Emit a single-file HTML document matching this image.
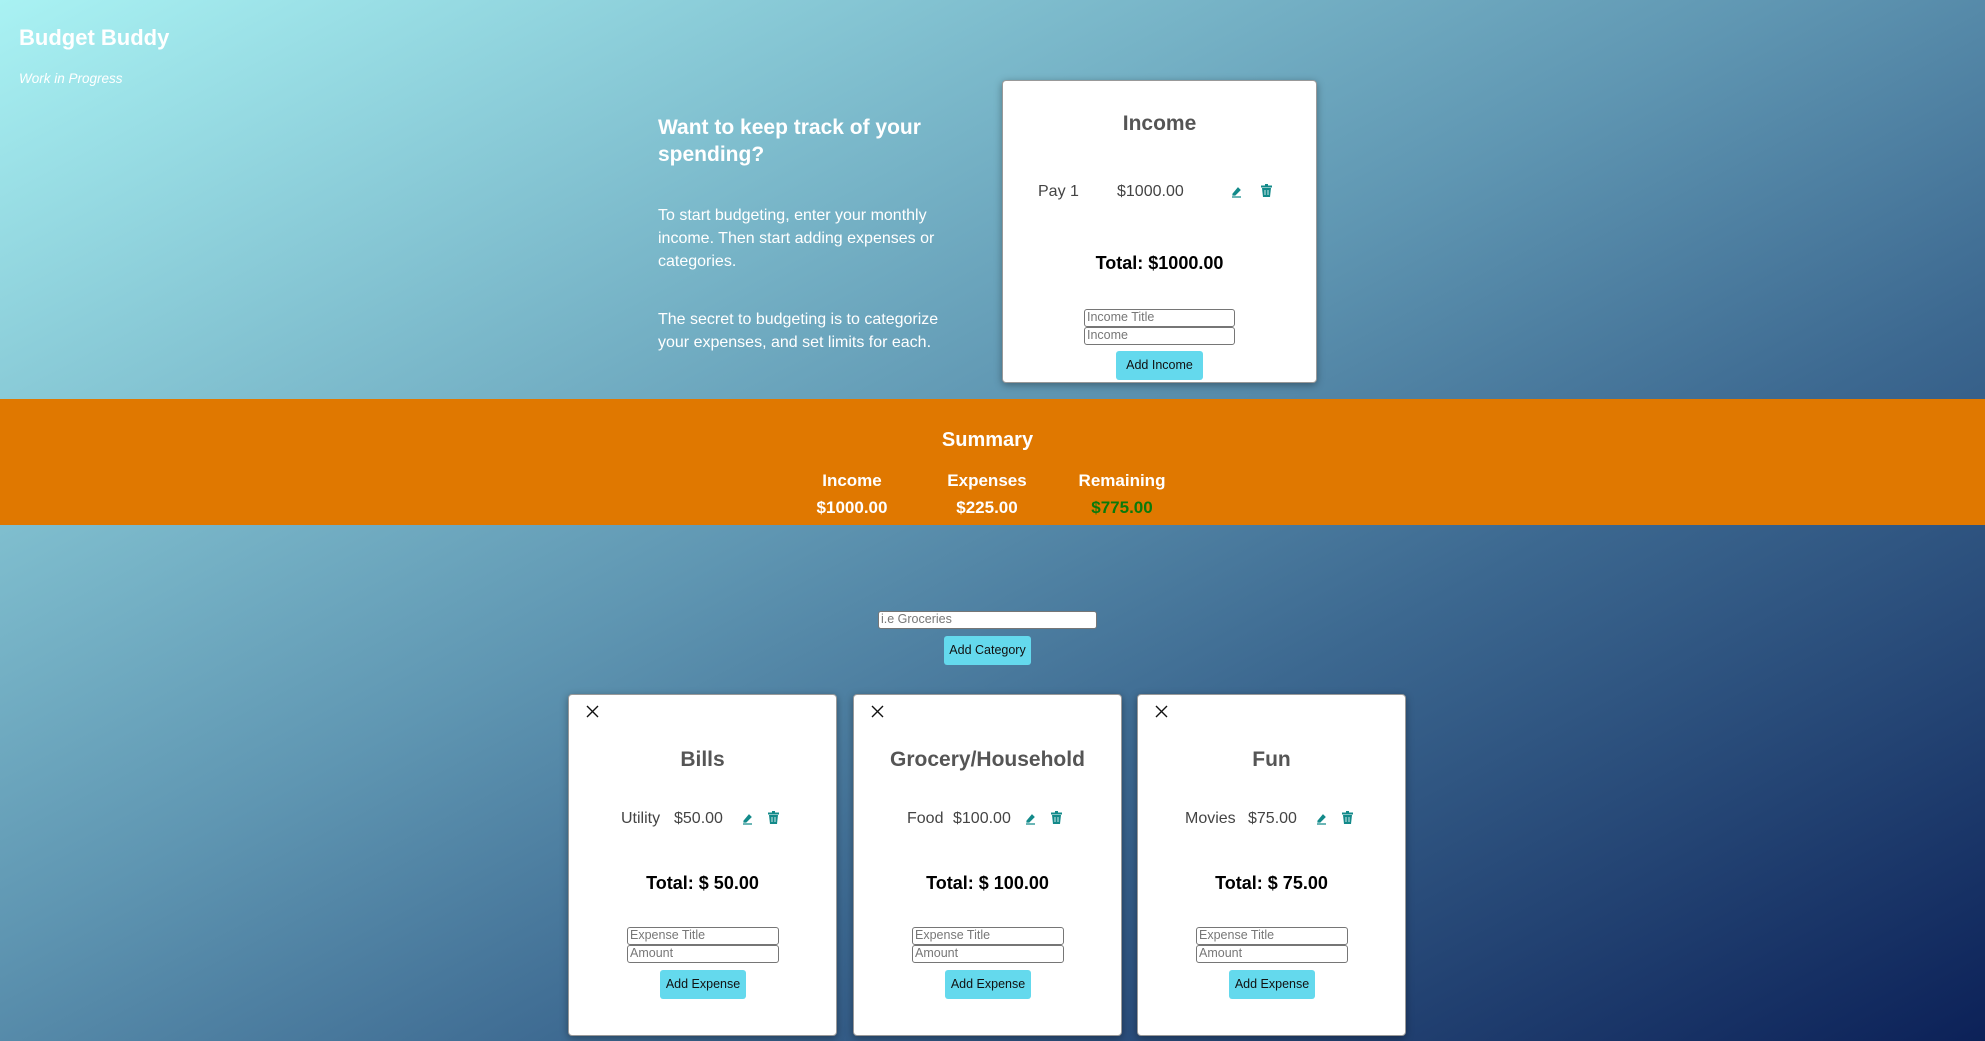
<!DOCTYPE html>
<html><head><meta charset="utf-8"><style>
*{margin:0;padding:0;box-sizing:border-box}
body{width:1985px;height:1041px;overflow:hidden;position:relative;font-family:"Liberation Sans",sans-serif;background:linear-gradient(to bottom right,#a9f2f3 0%,#5f96b2 45%,#3c6890 65%,#0c2158 100%)}
.a{position:absolute;white-space:nowrap}
.card{position:absolute;background:#fff;border:1px solid #999;border-radius:4px;box-shadow:0 2px 8px rgba(0,0,0,.35)}
.c{position:absolute;left:0;right:0;text-align:center;white-space:nowrap}
.inp{position:absolute;border:1px solid #767676;border-radius:3px;background:#fff;color:#777;font-size:12.5px;padding-left:2px;line-height:15px;height:18px}
.btn{position:absolute;background:#64d9ed;border-radius:3px;font-size:12.5px;color:#111;text-align:center}
.ttl{font-weight:bold;color:#555;font-size:21px}
.row{color:#444;font-size:16px;font-weight:300}
.tot{font-weight:bold;font-size:18px;color:#000}
.w{color:#fff}
</style></head><body>
<div class="a w" style="left:19px;top:25px;font-size:22px;font-weight:bold">Budget Buddy</div>
<div class="a w" style="left:19px;top:71px;font-size:13.5px;font-style:italic">Work in Progress</div>

<div class="a w" style="left:658px;top:114px;font-size:21px;font-weight:bold;line-height:27px">Want to keep track of your<br>spending?</div>
<div class="a w" style="left:658px;top:204px;font-size:16px;line-height:23px">To start budgeting, enter your monthly<br>income. Then start adding expenses or<br>categories.</div>
<div class="a w" style="left:658px;top:308px;font-size:16px;line-height:23px">The secret to budgeting is to categorize<br>your expenses, and set limits for each.</div>

<div class="card" style="left:1002px;top:80px;width:315px;height:303px">
 <div class="c ttl" style="top:31px">Income</div>
 <div class="a row" style="left:35px;top:102px">Pay 1</div>
 <div class="a row" style="left:114px;top:102px">$1000.00</div>
 <svg class="a" style="left:229px;top:105px" width="10" height="12" viewBox="0 0 10 12"><path d="M1 8 L6 2 L8 4 L3 9 L1 9Z M0 11 H9" fill="#138a8a" stroke="#138a8a" stroke-width="1.2"/></svg>
 <svg class="a" style="left:258px;top:103px" width="11" height="13" viewBox="0 0 11 13"><rect x="0" y="1.5" width="11" height="2" fill="#138a8a"/><rect x="4" y="0" width="3" height="2" fill="#138a8a"/><path d="M1 4 H10 L9 13 H2Z" fill="#138a8a"/><path d="M4 6 V11 M7 6 V11" stroke="#fff" stroke-width=".8"/></svg>
 <div class="c tot" style="top:172px">Total: $1000.00</div>
 <div class="inp" style="left:81px;top:228px;width:151px">Income Title</div>
 <div class="inp" style="left:81px;top:246px;width:151px">Income</div>
 <div class="btn" style="left:113px;top:270px;width:87px;height:29px;line-height:29px">Add Income</div>
</div>

<div style="position:absolute;left:0;top:399px;width:1985px;height:126px;background:#e07800"></div>
<div class="a w" style="left:0;width:1975px;text-align:center;top:429px;font-size:20px;font-weight:bold">Summary</div>
<div class="a w" style="left:792px;width:120px;text-align:center;top:471px;font-size:17px;font-weight:bold">Income</div>
<div class="a w" style="left:927px;width:120px;text-align:center;top:471px;font-size:17px;font-weight:bold">Expenses</div>
<div class="a w" style="left:1062px;width:120px;text-align:center;top:471px;font-size:17px;font-weight:bold">Remaining</div>
<div class="a w" style="left:792px;width:120px;text-align:center;top:498px;font-size:17px;font-weight:bold">$1000.00</div>
<div class="a w" style="left:927px;width:120px;text-align:center;top:498px;font-size:17px;font-weight:bold">$225.00</div>
<div class="a" style="left:1062px;width:120px;text-align:center;top:498px;font-size:17px;font-weight:bold;color:#0a7a0a">$775.00</div>

<div class="inp" style="left:878px;top:611px;width:219px">i.e Groceries</div>
<div class="btn" style="left:944px;top:636px;width:87px;height:29px;line-height:29px">Add Category</div>

<div class="card" style="left:568px;top:694px;width:269px;height:342px">
 <svg class="a" style="left:17px;top:10px" width="13" height="13"><path d="M1 1L12 12M12 1L1 12" stroke="#111" stroke-width="1.4"/></svg>
 <div class="c ttl" style="top:53px">Bills</div>
 <div class="a row" style="left:52px;top:115px">Utility</div>
 <div class="a row" style="left:105px;top:115px">$50.00</div>
 <svg class="a" style="left:174px;top:118px" width="10" height="12" viewBox="0 0 10 12"><path d="M1 8 L6 2 L8 4 L3 9 L1 9Z M0 11 H9" fill="#138a8a" stroke="#138a8a" stroke-width="1.2"/></svg>
 <svg class="a" style="left:199px;top:116px" width="11" height="13" viewBox="0 0 11 13"><rect x="0" y="1.5" width="11" height="2" fill="#138a8a"/><rect x="4" y="0" width="3" height="2" fill="#138a8a"/><path d="M1 4 H10 L9 13 H2Z" fill="#138a8a"/><path d="M4 6 V11 M7 6 V11" stroke="#fff" stroke-width=".8"/></svg>
 <div class="c tot" style="top:178px">Total: $ 50.00</div>
 <div class="inp" style="left:58px;top:232px;width:152px">Expense Title</div>
 <div class="inp" style="left:58px;top:250px;width:152px">Amount</div>
 <div class="btn" style="left:91px;top:275px;width:86px;height:29px;line-height:29px">Add Expense</div>
</div>

<div class="card" style="left:853px;top:694px;width:269px;height:342px">
 <svg class="a" style="left:17px;top:10px" width="13" height="13"><path d="M1 1L12 12M12 1L1 12" stroke="#111" stroke-width="1.4"/></svg>
 <div class="c ttl" style="top:53px">Grocery/Household</div>
 <div class="a row" style="left:53px;top:115px">Food</div>
 <div class="a row" style="left:99px;top:115px">$100.00</div>
 <svg class="a" style="left:172px;top:118px" width="10" height="12" viewBox="0 0 10 12"><path d="M1 8 L6 2 L8 4 L3 9 L1 9Z M0 11 H9" fill="#138a8a" stroke="#138a8a" stroke-width="1.2"/></svg>
 <svg class="a" style="left:197px;top:116px" width="11" height="13" viewBox="0 0 11 13"><rect x="0" y="1.5" width="11" height="2" fill="#138a8a"/><rect x="4" y="0" width="3" height="2" fill="#138a8a"/><path d="M1 4 H10 L9 13 H2Z" fill="#138a8a"/><path d="M4 6 V11 M7 6 V11" stroke="#fff" stroke-width=".8"/></svg>
 <div class="c tot" style="top:178px">Total: $ 100.00</div>
 <div class="inp" style="left:58px;top:232px;width:152px">Expense Title</div>
 <div class="inp" style="left:58px;top:250px;width:152px">Amount</div>
 <div class="btn" style="left:91px;top:275px;width:86px;height:29px;line-height:29px">Add Expense</div>
</div>

<div class="card" style="left:1137px;top:694px;width:269px;height:342px">
 <svg class="a" style="left:17px;top:10px" width="13" height="13"><path d="M1 1L12 12M12 1L1 12" stroke="#111" stroke-width="1.4"/></svg>
 <div class="c ttl" style="top:53px">Fun</div>
 <div class="a row" style="left:47px;top:115px">Movies</div>
 <div class="a row" style="left:110px;top:115px">$75.00</div>
 <svg class="a" style="left:179px;top:118px" width="10" height="12" viewBox="0 0 10 12"><path d="M1 8 L6 2 L8 4 L3 9 L1 9Z M0 11 H9" fill="#138a8a" stroke="#138a8a" stroke-width="1.2"/></svg>
 <svg class="a" style="left:204px;top:116px" width="11" height="13" viewBox="0 0 11 13"><rect x="0" y="1.5" width="11" height="2" fill="#138a8a"/><rect x="4" y="0" width="3" height="2" fill="#138a8a"/><path d="M1 4 H10 L9 13 H2Z" fill="#138a8a"/><path d="M4 6 V11 M7 6 V11" stroke="#fff" stroke-width=".8"/></svg>
 <div class="c tot" style="top:178px">Total: $ 75.00</div>
 <div class="inp" style="left:58px;top:232px;width:152px">Expense Title</div>
 <div class="inp" style="left:58px;top:250px;width:152px">Amount</div>
 <div class="btn" style="left:91px;top:275px;width:86px;height:29px;line-height:29px">Add Expense</div>
</div>
</body></html>
